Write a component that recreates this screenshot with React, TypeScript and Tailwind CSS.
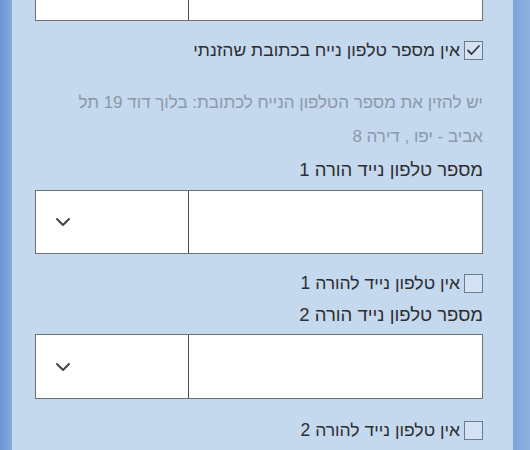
import React from 'react';

const font = { fontFamily: '"Liberation Sans", "DejaVu Sans", sans-serif' };

function PhoneField({ className = '' }: { className?: string }) {
  return (
    <div className={`flex h-[64px] border border-[#6f6f73] bg-white ${className}`}>
      <div className="flex-1 bg-white" />
      <div className="flex w-[153px] items-center justify-end border-r border-[#4a4a4e] bg-white pl-[19px]">
        <svg width="16" height="10" viewBox="0 0 16 10">
          <polyline points="2,2 8,8 14,2" fill="none" stroke="#444" strokeWidth="2" strokeLinecap="round" strokeLinejoin="round" />
        </svg>
      </div>
    </div>
  );
}

function Check({ label, checked, className = '' }: { label: string; checked?: boolean; className?: string }) {
  return (
    <label className={`flex h-[24px] items-center gap-[4px] text-[17.5px] text-[#2e2e30] ${className}`}>
      <span className="flex h-[19px] w-[19px] items-center justify-center border border-[#6d7a8c] bg-[#d4e2f3]">
        {checked && (
          <svg width="15" height="12" viewBox="0 0 15 12">
            <polyline points="2,6.5 5.5,10 13,2" fill="none" stroke="#3a3a3c" strokeWidth="1.8" strokeLinecap="round" strokeLinejoin="round" />
          </svg>
        )}
      </span>
      <span>{label}</span>
    </label>
  );
}

export default function App() {
  return (
    <div className="flex h-[450px] w-full overflow-hidden" style={font}>
      <div className="w-[12px] bg-gradient-to-r from-[#6b96d2] to-[#86abde]" />
      <div dir="rtl" className="flex-1 overflow-hidden bg-[#c4d8ee] pr-[30px] pl-[23px]">
        <PhoneField className="-mt-[43px]" />
        <Check className="mt-[17px]" label="אין מספר טלפון נייח בכתובת שהזנתי" checked />
        <p className="mt-[24px] text-[17px] leading-[34px] text-[#8d99a9]">
          יש להזין את מספר הטלפון הנייח לכתובת: בלוך דוד 19 תל
          <br />
          אביב - יפו , דירה 8
        </p>
        <div className="mt-[4px] h-[24px] text-[18.5px] leading-[24px] text-[#2e2e30]">מספר טלפון נייד הורה 1</div>
        <PhoneField className="mt-[8px]" />
        <Check className="mt-[17px]" label="אין טלפון נייד להורה 1" />
        <div className="mt-[8px] h-[24px] text-[18.5px] leading-[24px] text-[#2e2e30]">מספר טלפון נייד הורה 2</div>
        <PhoneField className="mt-[7px] h-[65px]" />
        <Check className="mt-[19px]" label="אין טלפון נייד להורה 2" />
      </div>
      <div className="w-[17px] bg-gradient-to-r from-[#7ea5da] to-[#8db1e0]" />
    </div>
  );
}
